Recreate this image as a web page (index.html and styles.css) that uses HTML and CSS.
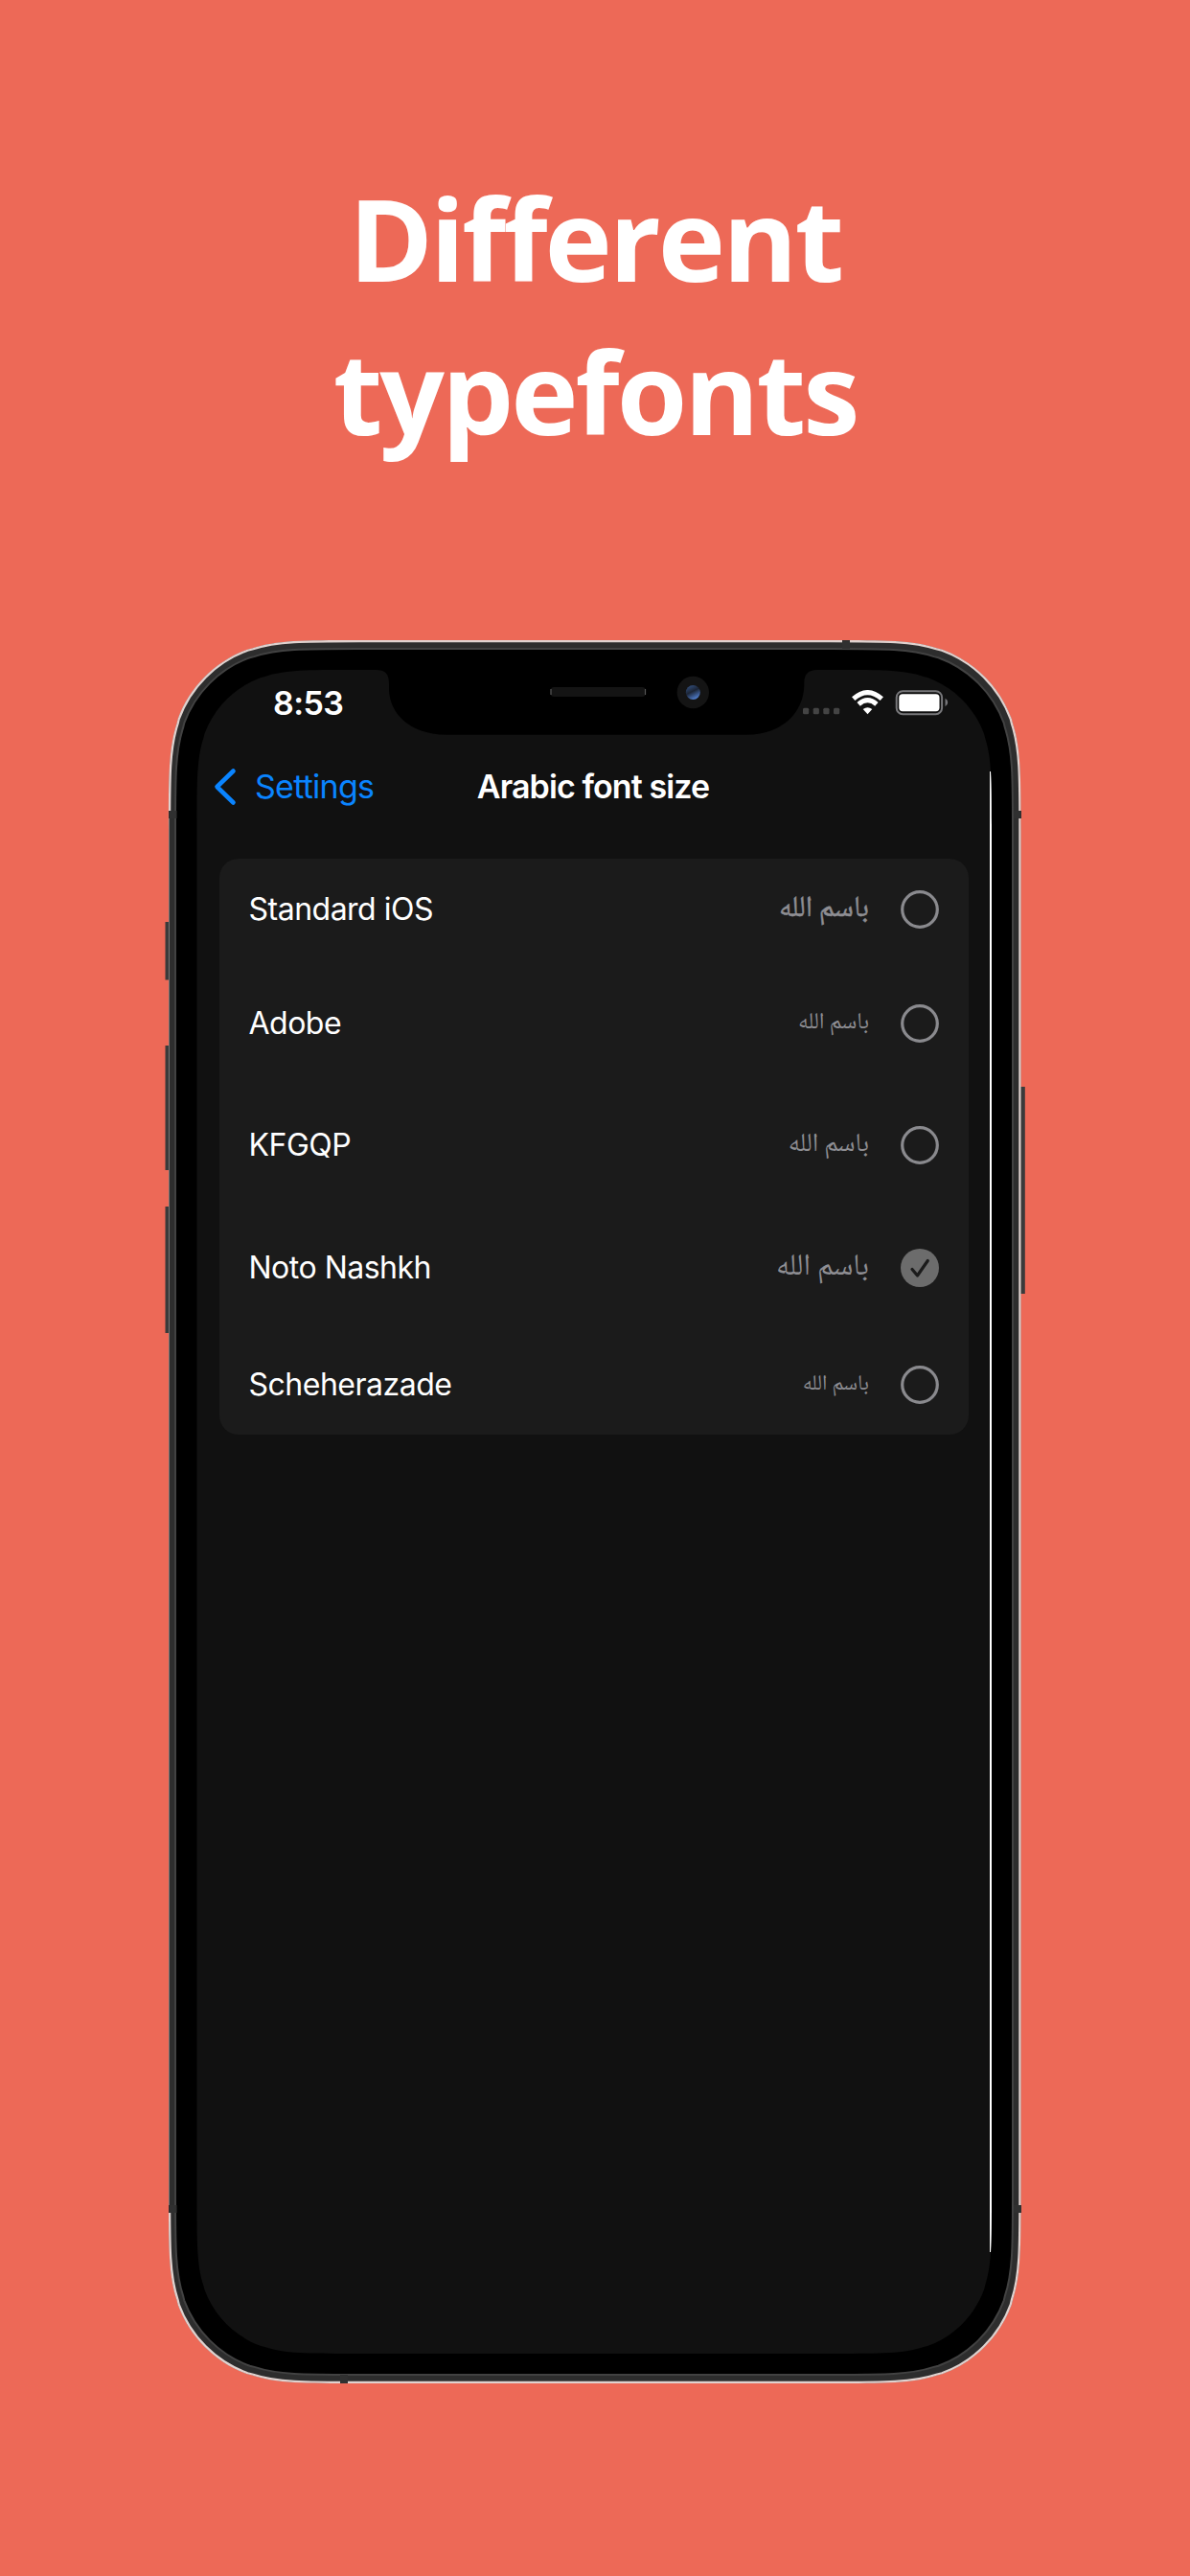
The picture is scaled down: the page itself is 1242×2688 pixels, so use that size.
FILE: index.html
```html
<!DOCTYPE html>
<html lang="en">
<head>
<meta charset="utf-8">
<title>Different typefonts</title>
<link rel="stylesheet" href="styles.css">
</head>
<body>
<main class="poster">
  <h1 class="headline"><span class="line-one">Different</span><span class="line-two">typefonts</span></h1>
  <section class="phone">
    <svg class="device" viewBox="-4 0 898 1819" aria-hidden="true">
      <defs>
        <path id="body" d="M198.7,0h492.1c57.2,0 85.8,0 111.6,8.5l5,1.2c33.6,12.3 60.1,38.8 72.4,72.4l1.2,5c8.5,25.8 8.5,54.4 8.5,111.6v1421.6c0,57.2 0,85.8 -8.5,111.6l-1.2,5c-12.3,33.6 -38.8,60.1 -72.4,72.4l-5,1.2c-25.8,8.5 -54.4,8.5 -111.6,8.5h-492.1c-57.2,0 -85.8,0 -111.6,-8.5l-5,-1.2c-33.6,-12.3 -60.1,-38.8 -72.4,-72.4l-1.2,-5c-8.5,-25.8 -8.5,-54.4 -8.5,-111.6v-1421.6c0,-57.2 0,-85.8 8.5,-111.6l1.2,-5c12.3,-33.6 38.8,-60.1 72.4,-72.4l5,-1.2c25.8,-8.5 54.4,-8.5 111.6,-8.5z"/>
        <path id="bezel" d="M195,9h498c54.1,0 81.2,0 105.6,8.1l4.7,1.1c31.8,11.6 56.9,36.7 68.5,68.5l1.1,4.7c8.1,24.4 8.1,51.5 8.1,105.6v1425c0,54.1 0,81.2 -8.1,105.6l-1.1,4.7c-11.6,31.8 -36.7,56.9 -68.5,68.5l-4.7,1.1c-24.4,8.1 -51.5,8.1 -105.6,8.1h-498c-54.1,0 -81.2,0 -105.6,-8.1l-4.7,-1.1c-31.8,-11.6 -56.9,-36.7 -68.5,-68.5l-1.1,-4.7c-8.1,-24.4 -8.1,-51.5 -8.1,-105.6v-1425c0,-54.1 0,-81.2 8.1,-105.6l1.1,-4.7c11.6,-31.8 36.7,-56.9 68.5,-68.5l4.7,-1.1c24.4,-8.1 51.5,-8.1 105.6,-8.1z"/>
        <path id="display" d="M191.5,31h505.5c46.6,0 70,0 91,6.9l4.1,1c27.4,10 49,31.6 59,59l1,4.1c6.9,21 6.9,44.4 6.9,91v1433c0,46.6 0,70 -6.9,91l-1,4.1c-10,27.4 -31.6,49 -59,59l-4.1,1c-21,6.9 -44.4,6.9 -91,6.9h-505.5c-46.6,0 -70,0 -91,-6.9l-4.1,-1c-27.4,-10 -49,-31.6 -59,-59l-1,-4.1c-6.9,-21 -6.9,-44.4 -6.9,-91v-1433c0,-46.6 0,-70 6.9,-91l1,-4.1c10,-27.4 31.6,-49 59,-59l4.1,-1c21,-6.9 44.4,-6.9 91,-6.9z"/>
        <clipPath id="bodyClip"><use href="#body"/></clipPath>
        <clipPath id="displayClip"><use href="#display"/></clipPath>
        <linearGradient id="lens" x1="0.2" y1="0" x2="0.7" y2="1">
          <stop offset="0" stop-color="#33507f"/><stop offset="0.45" stop-color="#1c2536"/><stop offset="1" stop-color="#5586dc"/>
        </linearGradient>
      </defs>
      <g class="buttons">
        <rect x="-3.5" y="294" width="6" height="60.5"/>
        <rect x="-3.5" y="423" width="6" height="130"/>
        <rect x="-3.5" y="591" width="6" height="132"/>
        <rect x="887" y="466" width="6.8" height="216"/>
      </g>
      <g clip-path="url(#bodyClip)">
        <use href="#body" class="band"/>
        <use href="#body" class="rim"/>
        <rect class="rim-shade" x="0" y="182" width="1" height="1455"/>
        <rect class="band" x="1" y="182" width="2" height="1455"/>
      </g>
      <use href="#bezel" class="bezel"/>
      <g class="antenna">
        <rect x="0" y="178" width="8.5" height="8"/><rect x="882" y="178" width="8" height="8"/>
        <rect x="0" y="1633" width="8.5" height="8"/><rect x="882" y="1633" width="8" height="8"/>
        <rect x="703" y="0" width="8" height="9"/><rect x="179" y="1810" width="8" height="9"/>
      </g>
      <use href="#display" class="display"/>
      <rect class="edge-light" clip-path="url(#displayClip)" x="857" y="137" width="2" height="1545"/>
      <path class="notch" d="M216,30.5v.5C226,31 230,35 230,45.500V52C231,79 255,98.700 290,98.700H603C638,98.700 662,78 663.300,48V45C663.300,36 667,31 677,31v-.5z"/>
      <rect class="speaker" x="398.500" y="49" width="99.500" height="10" rx="4"/>
      <path class="speaker-ends" d="M399,51v6M497.500,51v6"/>
      <circle class="camera" cx="547.300" cy="54.500" r="16.700"/>
      <circle cx="547.300" cy="54.500" r="7.500" fill="url(#lens)"/>
    </svg>
    <div class="screen">
      <div class="status">
        <span class="clock">8:53</span>
        <svg class="signals" viewBox="0 0 154 28" aria-hidden="true">
          <g class="dots"><rect x="1" y="18.700" width="6.200" height="6.500" rx="1.500"/><rect x="11.700" y="18.700" width="6.200" height="6.500" rx="1.500"/><rect x="22.300" y="18.700" width="6.200" height="6.500" rx="1.500"/><rect x="33" y="18.700" width="6.200" height="6.500" rx="1.500"/></g>
          <g class="wifi">
            <path d="M53.700,9.200Q68.500,-4 83.300,9.200" />
            <path d="M59.100,14.800Q68.500,6.400 77.900,14.800"/>
            <path class="wifi-base" d="M68.500,25.200l-4.800,-5.100q4.800,-3.900 9.600,0z"/>
          </g>
          <rect class="battery" x="98.700" y="1.200" width="47.400" height="24" rx="6.500"/>
          <rect class="charge" x="101.300" y="4.200" width="42.200" height="18" rx="3.700"/>
          <path class="battery-cap" d="M149.500,8.800q2.700,1.300 2.700,4.200t-2.700,4.200z"/>
        </svg>
      </div>
      <nav class="bar">
        <a class="back"><svg viewBox="0 0 24 40" aria-hidden="true"><path d="M20.500,3.500L3.500,20L20.500,36.500"/></svg>Settings</a>
        <h2 class="title">Arabic font size</h2>
        <span></span>
      </nav>
      <ul class="options">
        <li class="option row-a"><span class="name">Standard iOS</span><bdi class="sample" lang="ar">باسم الله</bdi><svg class="radio" viewBox="0 0 40 40"><circle cx="20" cy="20" r="18.300"/></svg></li>
        <li class="option row-b"><span class="name">Adobe</span><bdi class="sample" lang="ar">باسم الله</bdi><svg class="radio" viewBox="0 0 40 40"><circle cx="20" cy="20" r="18.300"/></svg></li>
        <li class="option row-c"><span class="name">KFGQP</span><bdi class="sample" lang="ar">باسم الله</bdi><svg class="radio" viewBox="0 0 40 40"><circle cx="20" cy="20" r="18.300"/></svg></li>
        <li class="option row-d"><span class="name">Noto Nashkh</span><bdi class="sample" lang="ar">باسم الله</bdi><svg class="radio checked" viewBox="0 0 40 40"><circle cx="20" cy="20" r="20"/><path d="M12,21.500L17.500,28L28.300,12.500"/></svg></li>
        <li class="option row-e"><span class="name">Scheherazade</span><bdi class="sample" lang="ar">باسم الله</bdi><svg class="radio" viewBox="0 0 40 40"><circle cx="20" cy="20" r="18.300"/></svg></li>
      </ul>
    </div>
  </section>
</main>
</body>
</html>
```
FILE: styles.css
```css
* { box-sizing: border-box; }
body { margin: 0; background: #ed6957; font-family: Inter, "Liberation Sans", sans-serif; }
.poster { width: 1242px; height: 2688px; padding-top: 168px; display: flex; flex-direction: column; align-items: center; overflow: hidden; }
.headline { margin: 0; height: 500px; width: 100%; display: flex; flex-direction: column; align-items: center; color: #fff; font: 700 119px/160px "Open Sans", "Noto Sans", sans-serif; letter-spacing: -3px; font-feature-settings: "liga" 0; }

.phone { width: 898px; height: 1819px; display: grid; }
.device, .screen { grid-area: 1 / 1; }
.device { width: 898px; height: 1819px; }
.buttons { fill: #3a3a3a; }
.band { fill: #2d2d2d; }
.rim { fill: none; stroke: #dfd2cf; stroke-width: 4.4; }
.rim-shade { fill: #777; }
.bezel { fill: #000; stroke: #424242; stroke-width: 2; }
.antenna { fill: #303030; }
.display { fill: #111; }
.edge-light { fill: #fff; }
.notch { fill: #000; }
.speaker, .camera { fill: #141414; }
.speaker-ends { stroke: #555; stroke-width: 1.2; }

.screen { padding: 31px 37px 0 33px; z-index: 1; }
.status { height: 69px; padding: 0 42px 0 80px; display: flex; justify-content: space-between; align-items: center; }
.clock { color: #fff; font-size: 34px; font-weight: 600; line-height: 40px; letter-spacing: -0.6px; }
.signals { width: 154px; height: 28px; }
.dots { fill: #444; }
.wifi { fill: none; stroke: #fff; stroke-width: 5; }
.wifi .wifi-base { fill: #fff; stroke: none; }
.battery { fill: none; stroke: #77777a; stroke-width: 2; }
.charge { fill: #fff; }
.battery-cap { fill: #77777a; }

.bar { height: 106px; padding: 0 18px; display: grid; grid-template-columns: 1fr auto 1fr; align-items: center; }
.back { display: flex; align-items: center; gap: 19px; color: #0a84ff; font-size: 34px; line-height: 42px; letter-spacing: -0.75px; }
.back svg { width: 24px; height: 40px; fill: none; stroke: #0a84ff; stroke-width: 4.6; stroke-linecap: round; stroke-linejoin: round; }
.title { margin: 0; color: #fff; font-size: 34px; font-weight: 600; line-height: 42px; letter-spacing: -0.9px; }

.options { list-style: none; margin: 22px 22px 0 24px; padding: 0; border-radius: 20px; background: #1b1b1b; }
.option { display: flex; align-items: center; padding: 0 31px 0 30.5px; }
.name { flex: 1; color: #fff; font-size: 32px; line-height: 40px; letter-spacing: -0.5px; }
.sample { margin-right: 33px; color: #8e8e93; font-family: "Noto Naskh Arabic", "DejaVu Sans", sans-serif; line-height: 50px; white-space: nowrap; }
.radio { width: 40px; height: 40px; fill: none; stroke: #8a8a8e; stroke-width: 3.2; }
.radio.checked circle { fill: #6c6c6c; stroke: none; }
.radio.checked path { stroke: #1b1b1b; stroke-width: 3.2; stroke-linecap: round; stroke-linejoin: round; }
.row-a { height: 105px; } .row-a .sample { font-size: 30.5px; -webkit-text-stroke: 0.5px #8e8e93; }
.row-b { height: 134px; } .row-b .sample { font-size: 24px; }
.row-c { height: 119px; } .row-c .sample { font-size: 27.3px; }
.row-d { height: 138px; } .row-d .sample { font-size: 31.5px; }
.row-e { height: 105px; } .row-e .sample { font-size: 22.5px; }
```
